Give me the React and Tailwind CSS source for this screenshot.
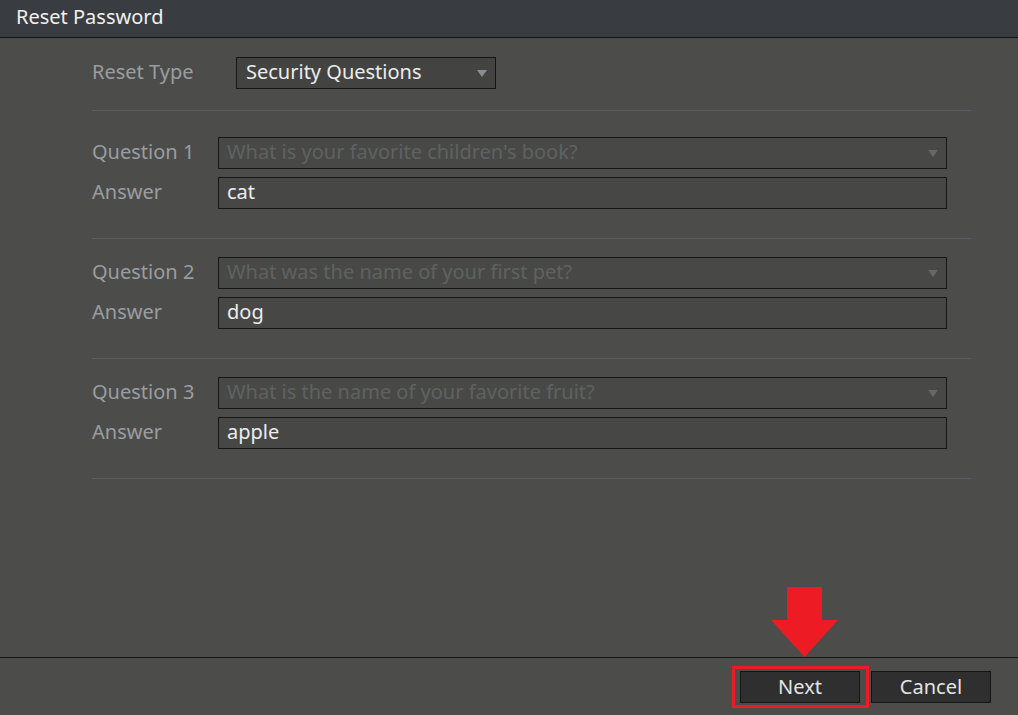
import React from 'react';

const font = { fontFamily: '"Noto Sans", "Open Sans", sans-serif' };

function Caret({ className }) {
    return (
        <svg width="10" height="7" viewBox="0 0 10 7" className={className}>
            <path d="M0 0 H10 L5 7 Z" fill="currentColor" />
        </svg>
    );
}

function QuestionBlock({ num, question, answer, first }) {
    return (
        <div className={first ? 'pt-[26px]' : 'pt-[18px]'}>
            <div className="flex items-center h-[32px]">
                <div className="w-[126px] text-[20px] text-[#9a9da0] pb-[2px]">Question {num}</div>
                <div className="flex-1 h-[32px] mr-[24px] flex items-center justify-between border border-[#161616] bg-[#484947] pl-[8px] pr-[8px]">
                    <span className="text-[20px] text-[#5f6161] truncate pb-[2px]">{question}</span>
                    <Caret className="text-[#666868] shrink-0" />
                </div>
            </div>
            <div className="flex items-center h-[32px] mt-[8px]">
                <div className="w-[126px] text-[20px] text-[#9a9da0] pb-[2px]">Answer</div>
                <div className="flex-1 h-[32px] mr-[24px] flex items-center border border-[#161616] bg-[#474846] pl-[8px]">
                    <span className="text-[20px] text-[#ececec] pb-[2px]">{answer}</span>
                </div>
            </div>
            <div className="h-px bg-[#5a5b6a] mt-[29px]" />
        </div>
    );
}

export default function App() {
    const questions = [
        { q: "What is your favorite children's book?", a: 'cat' },
        { q: 'What was the name of your first pet?', a: 'dog' },
        { q: 'What is the name of your favorite fruit?', a: 'apple' },
    ];

    return (
        <div className="w-[1018px] h-[715px] flex flex-col bg-[#4c4d4b] overflow-hidden" style={font}>
            <div className="h-[38px] shrink-0 bg-[#393c41] flex items-center pl-[16px] pb-[3px] border-b border-[#111214]">
                <span className="text-[20px] text-[#f0f0f0]">Reset Password</span>
            </div>

            <div className="flex-1 pl-[92px] pr-[47px] pt-[19px]">
                <div className="flex items-center h-[32px]">
                    <div className="w-[144px] text-[20px] text-[#9a9da0] pb-[2px]">Reset Type</div>
                    <div className="w-[260px] h-[32px] flex items-center justify-between border border-[#161616] bg-[#434442] pl-[9px] pr-[8px]">
                        <span className="text-[20px] text-[#ececec] pb-[2px]">Security Questions</span>
                        <Caret className="text-[#8a8d92]" />
                    </div>
                </div>
                <div className="h-px bg-[#5a5b6a] mt-[21px]" />

                {questions.map((item, i) => (
                    <QuestionBlock key={i} num={i + 1} question={item.q} answer={item.a} first={i === 0} />
                ))}
            </div>

            <div className="relative h-[58px] shrink-0 border-t border-[#151515] flex justify-end items-start pt-[13px] pr-[27px] gap-[11px]">
                {/* arrow pointing at Next */}
                <svg className="absolute left-[771px] top-[-71px]" width="67" height="71" viewBox="0 0 67 71">
                    <path d="M16 0 H51 V33 H67 L33.5 70 L0 33 H16 Z" fill="#ed1c24" />
                </svg>
                {/* highlight frame */}
                <div className="absolute left-[732px] top-[8px] w-[137px] h-[42px] border-[3px] border-[#ed1c24]" />
                <button className="w-[120px] h-[32px] bg-[#2e2f2e] border border-[#151515] text-[20px] text-[#e4e4e4] leading-none">
                    Next
                </button>
                <button className="w-[120px] h-[32px] bg-[#2e2f2e] border border-[#151515] text-[20px] text-[#e4e4e4] leading-none">
                    Cancel
                </button>
            </div>
        </div>
    );
}
